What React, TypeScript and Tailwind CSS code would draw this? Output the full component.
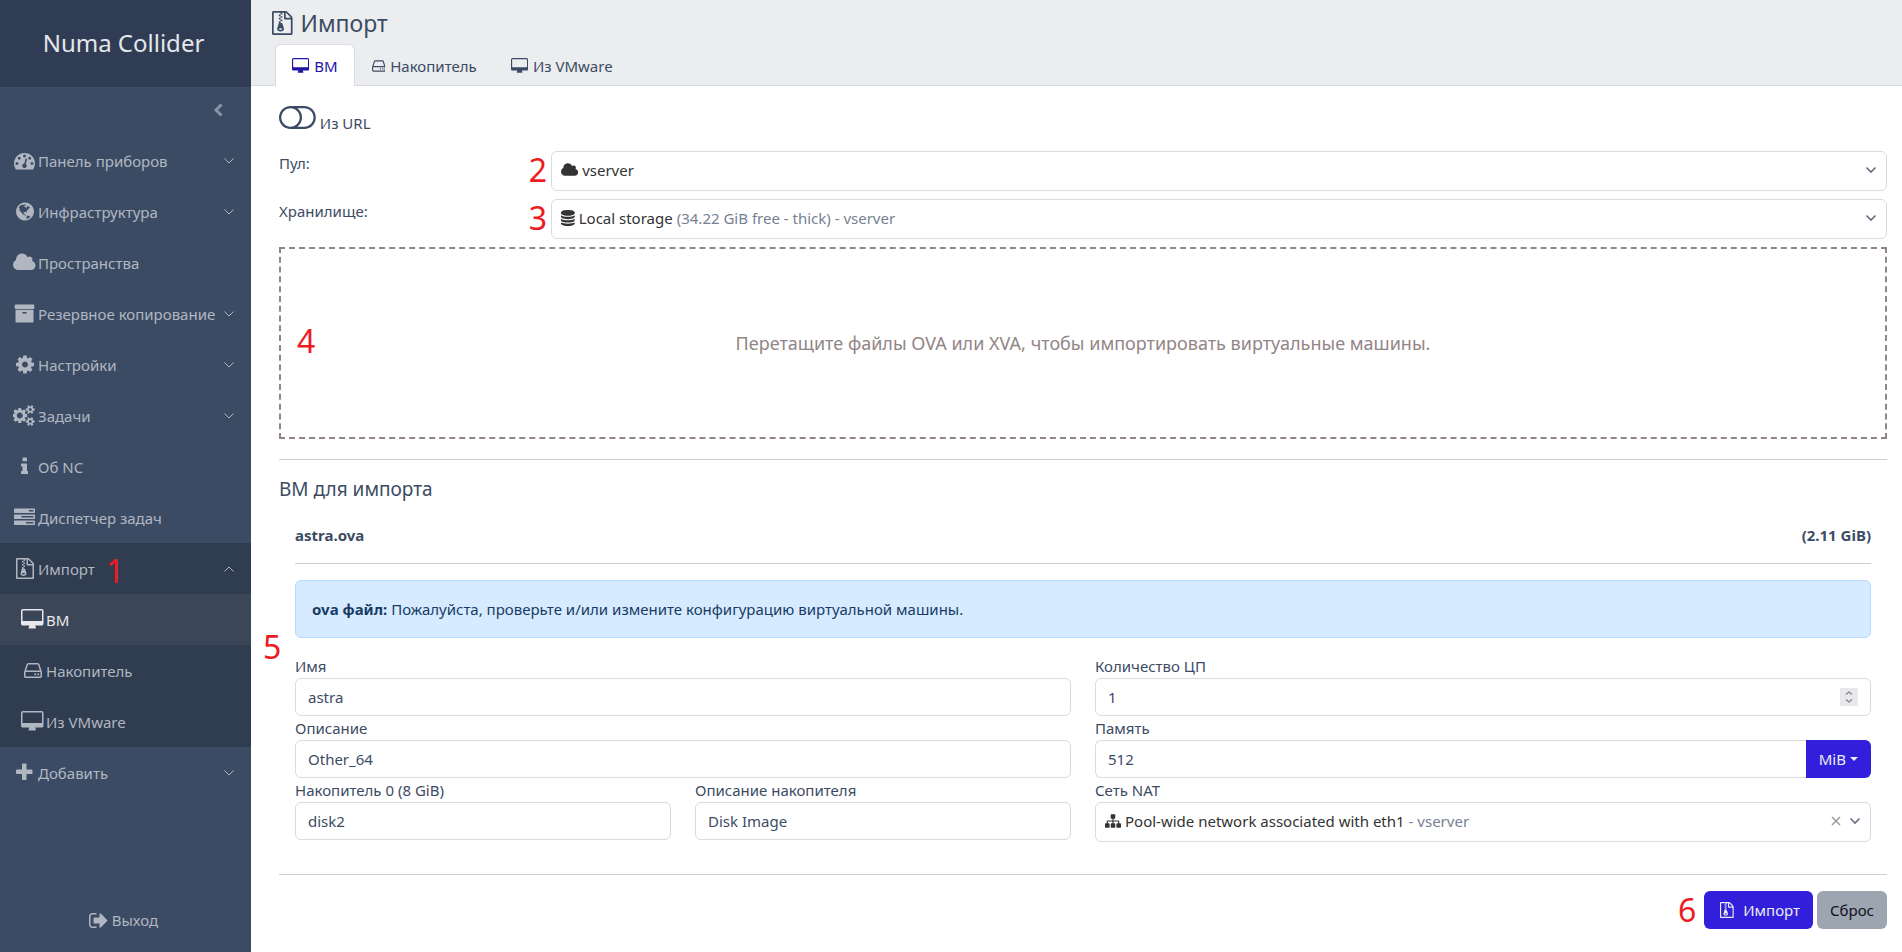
import { useState } from "react";
import type { ReactNode } from "react";
import clsx from "clsx";

type IconDef = { box: string; d: string };

const ICONS: Record<string, IconDef> = {
  desktop: {
    box: "0 0 1920 1792",
    d: "M1792 992v-832q0-13-9.5-22.5t-22.5-9.5h-1600q-13 0-22.5 9.5t-9.5 22.5v832q0 13 9.5 22.5t22.5 9.5h1600q13 0 22.5-9.5t9.5-22.5zm128-832v1088q0 66-47 113t-113 47h-544q0 37 16 77.5t32 71 16 43.5q0 26-19 45t-45 19h-512q-26 0-45-19t-19-45q0-14 16-44t32-70 16-78h-544q-66 0-113-47t-47-113v-1088q0-66 47-113t113-47h1600q66 0 113 47t47 113z",
  },
  hdd: {
    box: "0 0 1536 1792",
    d: "M1040 1216q0 33-23.5 56.5t-56.5 23.5-56.5-23.5-23.5-56.5 23.5-56.5 56.5-23.5 56.5 23.5 23.5 56.5zm256 0q0 33-23.5 56.5t-56.5 23.5-56.5-23.5-23.5-56.5 23.5-56.5 56.5-23.5 56.5 23.5 23.5 56.5zm112 160v-320q0-13-9.5-22.5t-22.5-9.5h-1216q-13 0-22.5 9.5t-9.5 22.5v320q0 13 9.5 22.5t22.5 9.5h1216q13 0 22.5-9.5t9.5-22.5zm-1230-480h1180l-157-482q-4-13-16-21.5t-26-8.5h-782q-14 0-26 8.5t-16 21.5zm1358 160v320q0 66-47 113t-113 47h-1216q-66 0-113-47t-47-113v-320q0-25 16-75l197-606q17-53 63-86t101-33h782q55 0 101 33t63 86l197 606q16 50 16 75z",
  },
  cloud: {
    box: "64 0 1920 1792",
    d: "M1984 1152q0 159-112.5 271.5t-271.5 112.5h-1088q-185 0-316.5-131.5t-131.5-316.5q0-132 71-241.5t187-163.5q-2-28-2-43 0-212 150-362t362-150q158 0 286.5 88t187.5 230q70-62 166-62 106 0 181 75t75 181q0 75-41 138 129 30 213 134.5t84 239.5z",
  },
  dashboard: {
    box: "0 0 1792 1792",
    d: "M384 1152q0-53-37.5-90.5t-90.5-37.5-90.5 37.5-37.5 90.5 37.5 90.5 90.5 37.5 90.5-37.5 37.5-90.5zm192-448q0-53-37.5-90.5t-90.5-37.5-90.5 37.5-37.5 90.5 37.5 90.5 90.5 37.5 90.5-37.5 37.5-90.5zm428 481l101-382q6-26-7.5-48.5t-38.5-29.5-48 6.5-30 39.5l-101 382q-60 5-107 43.5t-63 98.5q-20 77 20 146t117 89 146-20 89-117q16-60-6-117t-72-91zm660-33q0-53-37.5-90.5t-90.5-37.5-90.5 37.5-37.5 90.5 37.5 90.5 90.5 37.5 90.5-37.5 37.5-90.5zm-640-640q0-53-37.5-90.5t-90.5-37.5-90.5 37.5-37.5 90.5 37.5 90.5 90.5 37.5 90.5-37.5 37.5-90.5zm448 192q0-53-37.5-90.5t-90.5-37.5-90.5 37.5-37.5 90.5 37.5 90.5 90.5 37.5 90.5-37.5 37.5-90.5zm320 448q0 261-141 483-19 29-54 29h-1402q-35 0-54-29-141-221-141-483 0-182 71-348t191-286 286-191 348-71 348 71 286 191 191 286 71 348z",
  },
  globe: {
    box: "128 0 1536 1792",
    d: "M896 128q209 0 385.5 103t279.5 279.5 103 385.5-103 385.5-279.5 279.5-385.5 103-385.5-103-279.5-279.5-103-385.5 103-385.5 279.5-279.5 385.5-103zm274 521q-2 1-9.5 9.5t-13.5 9.5q2 0 4.5-5t5-11 3.5-7q6-7 22-15 14-6 52-12 34-8 51 11-2-2 9.5-13t14.5-12q3-2 15-4.5t15-7.5l2-22q-12 1-17.5-7t-6.5-21q0 2-6 8 0-7-4.5-8t-11.5 1-9 1q-10-3-15-7.5t-8-16.5-4-15q-2-5-9.5-11t-9.5-10q-1-2-2.5-5.5t-3-6.5-4-5.5-5.5-2.5-7 5-7.5 10-4.5 5q-3-2-6-1.5t-4.5 1-4.5 3-5 3.5q-3 2-8.5 3t-8.5 2q15-5-1-11-10-4-16-3 9-4 7.5-12t-8.5-14h5q-1-4-8.5-8.5t-17.5-8.5-13-6q-8-5-34-9.5t-33-.5q-5 6-4.5 10.5t4 14 3.5 12.5q1 6-5.5 13t-6.5 12q0 7 14 15.5t10 21.5q-3 8-16 16t-16 12q-5 8-1.5 18.5t10.5 16.5q2 2 1.5 4t-3.5 4.5-5.5 4-6.5 3.5l-3 2q-11 5-20.5-6t-13.5-26q-7-25-16-30-23-8-29 1-5-13-41-26-25-9-58-4 6-1 0-15-7-15-19-12 3-6 4-17.5t1-13.5q3-13 12-23 1-1 7-8.5t9.5-13.5.5-6q35 4 50-11 5-5 11.5-17t10.5-17q9-6 14-5.5t14.5 5.5 14.5 5q14 1 15.5-11t-7.5-20q12 1 3-17-4-7-8-9-12-4-27 5-8 4 2 8-1-1-9.5 10.5t-16.5 17.5-16-5q-1-1-5.5-13.5t-9.5-13.5q-8 0-16 15 3-8-11-15t-24-8q19-12-8-27-7-4-20.5-5t-19.5 4q-5 7-5.5 11.5t5 8 10.5 5.5 11.5 4 8.5 3q14 10 8 14-2 1-8.5 3.5t-11.5 4.5-6 4q-3 4 0 14t-2 14q-5-5-9-17.5t-7-16.5q7 9-25 6l-10-1q-4 0-16 2t-20.5 1-13.5-8q-4-8 0-20 1-4 4-2-4-3-11-9.5t-10-8.5q-46 15-94 41 6 1 12-1 5-2 13-6.5t10-5.5q34-14 42-7l5-5q14 16 20 25-7-4-30-1-20 6-22 12 7 12 5 18-4-3-11.5-10t-14.5-11-15-5q-16 0-22 1-146 80-235 222 7 7 12 8 4 1 5 9t2.5 11 11.5-3q9 8 3 19 1-1 44 27 19 17 21 21 3 11-10 18-1-2-9-9t-9-4q-3 5 .5 18.5t10.5 12.5q-7 0-9.5 16t-2.5 35.5-1 23.5l2 1q-3 12 5.5 34.5t21.5 19.5q-13 3 20 43 6 8 8 9 3 2 12 7.5t15 10 10 10.5q4 5 10 22.5t14 23.5q-2 6 9.5 20t10.5 23q-1 0-2.5 1t-2.5 1q3 7 15.5 14t15.5 13q1 3 2 10t3 11 8 2q2-20-24-62-15-25-17-29-3-5-5.5-15.5t-4.5-14.5q2 0 6 1.5t8.5 3.5 7.5 4 2 3q-3 7 2 17.5t12 18.5 17 19 12 13q6 6 14 19.5t0 13.5q9 0 20 10.5t17 19.5q5 8 8 26t5 24q2 7 8.5 13.5t12.5 9.5l16 8 13 7q5 2 18.5 10.5t21.5 11.5q10 4 16 4t14.5-2.5 13.5-3.5q15-2 29 15t21 21q36 19 55 11-2 1 .5 7.5t8 15.5 9 14.5 5.5 8.5q5 6 18 15t18 15q6-4 7-9-3 8 7 20t18 10q14-3 14-32-31 15-49-18 0-1-2.5-5.5t-4-8.5-2.5-8.5 0-7.5 5-3q9 0 10-3.5t-2-12.5-4-13q-1-8-11-20t-12-15q-5 9-16 8t-16-9q0 1-1.5 5.5t-1.5 6.5q-13 0-15-1 1-3 2.5-17.5t3.5-22.5q1-4 5.5-12t7.5-14.5 4-12.5-4.5-9.5-17.5-2.5q-19 1-26 20-1 3-3 10.5t-5 11.5-9 7q-7 3-24 2t-24-5q-13-8-22.5-29t-9.5-37q0-10 2.5-26.5t3-25-5.5-24.5q3-2 9-9.5t10-10.5q2-1 4.5-1.5t4.5 0 4-1.5 3-6q-1-1-4-3-3-3-4-3 7 3 28.5-1.5t27.5 1.5q15 11 22-2 0-1-2.5-9.5t-.5-13.5q5 27 29 9 3 3 15.5 5t17.5 5q3 2 7 5.5t5.5 4.5 5-.5 8.5-6.5q10 14 12 24 11 40 19 44 7 3 11 2t4.5-9.5 0-14-1.5-12.5l-1-8v-18l-1-8q-15-3-18.5-12t1.5-18.5 15-18.5q1-1 8-3.5t15.5-6.5 12.5-8q21-19 15-35 7 0 11-9-1 0-5-3t-7.5-5-4.5-2q9-5 2-16 5-3 7.5-11t7.5-10q9 12 21 2 8-8 1-16 5-7 20.5-10.5t18.5-9.5q7 2 8-2t1-12 3-12q4-5 15-9t13-5l17-11q3-4 0-4 18 2 31-11 10-11-6-20 3-6-3-9.5t-15-5.5q3-1 11.5-.5t10.5-1.5q15-10-7-16-17-5-43 12zm-163 877q206-36 351-189-3-3-12.5-4.5t-12.5-3.5q-18-7-24-8 1-7-2.5-13t-8-9-12.5-8-11-7q-2-2-7-6t-7-5.5-7.5-4.5-8.5-2-10 1l-3 1q-3 1-5.5 2.5t-5.5 3-4 3 0 2.5q-21-17-36-22-5-1-11-5.5t-10.5-7-10-1.5-11.5 7q-5 5-6 15t-2 13q-7-5 0-17.5t2-18.5q-3-6-10.5-4.5t-12 4.5-11.5 8.5-9 6.5-8.5 5.5-8.5 7.5q-3 4-6 12t-5 11q-2-4-11.5-6.5t-9.5-5.5q2 10 4 35t5 38q7 31-12 48-27 25-29 40-4 22 12 26 0 7-8 20.5t-7 21.5q0 6 2 16z",
  },
  archive: {
    box: "0 0 1792 1792",
    d: "M1088 832q0-26-19-45t-45-19h-256q-26 0-45 19t-19 45 19 45 45 19h256q26 0 45-19t19-45zm576-192v960q0 26-19 45t-45 19h-1408q-26 0-45-19t-19-45v-960q0-26 19-45t45-19h1408q26 0 45 19t19 45zm64-448v256q0 26-19 45t-45 19h-1536q-26 0-45-19t-19-45v-256q0-26 19-45t45-19h1536q26 0 45 19t19 45z",
  },
  cog: {
    box: "128 0 1536 1792",
    d: "M1152 896q0-106-75-181t-181-75-181 75-75 181 75 181 181 75 181-75 75-181zm512-109v222q0 12-8 23t-20 13l-185 28q-19 54-39 91 35 50 107 138 10 12 10 25t-9 23q-27 37-99 108t-94 71q-12 0-26-9l-138-108q-44 23-91 38-16 136-29 186-7 28-36 28h-222q-14 0-24.5-8.5t-11.5-21.5l-28-184q-49-16-90-37l-141 107q-10 9-25 9-14 0-25-11-126-114-165-168-7-10-7-23 0-12 8-23 15-21 51-66.5t54-70.5q-27-50-41-99l-183-27q-13-2-21-12.5t-8-23.5v-222q0-12 8-23t19-13l186-28q14-46 39-92-40-57-107-138-10-12-10-24 0-10 9-23 26-36 98.5-107.5t94.5-71.5q13 0 26 10l138 107q44-23 91-38 16-136 29-186 7-28 36-28h222q14 0 24.5 8.5t11.5 21.5l28 184q49 16 90 37l142-107q9-9 24-9 13 0 25 10 129 119 165 170 7 8 7 22 0 12-8 23-15 21-51 66.5t-54 70.5q26 50 41 98l183 28q13 2 21 12.5t8 23.5z",
  },
  cogs: {
    box: "0 0 1920 1792",
    d: "M832 896q0-106-75-181t-181-75-181 75-75 181 75 181 181 75 181-75 75-181zm768 512q0-52-38-90t-90-38-90 38-38 90q0 53 37.5 90.5t90.5 37.5 90.5-37.5 37.5-90.5zm0-1024q0-52-38-90t-90-38-90 38-38 90q0 53 37.5 90.5t90.5 37.5 90.5-37.5 37.5-90.5zm-384 421v185q0 10-7 19.5t-16 10.5l-155 24q-11 35-32 76 34 48 90 115 7 11 7 20 0 12-7 19-23 30-82.5 89.5t-78.5 59.5q-11 0-21-7l-115-90q-37 19-77 31-11 108-23 155-7 24-30 24h-186q-11 0-20-7.5t-10-17.5l-23-153q-34-10-75-31l-118 89q-7 7-20 7-11 0-21-8-144-133-144-160 0-9 7-19 10-14 41-53t47-61q-23-44-35-82l-152-24q-10-1-17-9.5t-7-19.5v-185q0-10 7-19.5t16-10.5l155-24q11-35 32-76-34-48-90-115-7-11-7-20 0-12 7-20 22-30 82-89t79-59q11 0 21 7l115 90q34-18 77-32 11-108 23-154 7-24 30-24h186q11 0 20 7.5t10 17.5l23 153q34 10 75 31l118-89q8-7 20-7 11 0 21 8 144 133 144 160 0 8-7 19-12 16-42 54t-45 60q23 48 34 82l152 23q10 2 17 10.5t7 19.5zm640 533v140q0 16-149 31-12 27-30 52 51 113 51 138 0 4-4 7-122 71-124 71-8 0-46-47t-52-68q-20 2-30 2t-30-2q-14 21-52 68t-46 47q-2 0-124-71-4-3-4-7 0-25 51-138-18-25-30-52-149-15-149-31v-140q0-16 149-31 13-29 30-52-51-113-51-138 0-4 4-7 4-2 35-20t59-34 30-16q8 0 46 46.5t52 67.5q20-2 30-2t30 2q51-71 92-112l6-2q4 0 124 70 4 3 4 7 0 25-51 138 17 23 30 52 149 15 149 31zm0-1024v140q0 16-149 31-12 27-30 52 51 113 51 138 0 4-4 7-122 71-124 71-8 0-46-47t-52-68q-20 2-30 2t-30-2q-14 21-52 68t-46 47q-2 0-124-71-4-3-4-7 0-25 51-138-18-25-30-52-149-15-149-31v-140q0-16 149-31 13-29 30-52-51-113-51-138 0-4 4-7 4-2 35-20t59-34 30-16q8 0 46 46.5t52 67.5q20-2 30-2t30 2q51-71 92-112l6-2q4 0 124 70 4 3 4 7 0 25-51 138 17 23 30 52 149 15 149 31z",
  },
  info: {
    box: "576 0 640 1792",
    d: "M1216 1344v128q0 26-19 45t-45 19h-512q-26 0-45-19t-19-45v-128q0-26 19-45t45-19h64v-384h-64q-26 0-45-19t-19-45v-128q0-26 19-45t45-19h384q26 0 45 19t19 45v576h64q26 0 45 19t19 45zm-128-1152v192q0 26-19 45t-45 19h-256q-26 0-45-19t-19-45v-192q0-26 19-45t45-19h256q26 0 45 19t19 45z",
  },
  tasks: {
    box: "0 0 1792 1792",
    d: "M1024 1408h640v-128h-640v128zm-384-512h1024v-128h-1024v128zm640-512h384v-128h-384v128zm512 832v256q0 26-19 45t-45 19h-1664q-26 0-45-19t-19-45v-256q0-26 19-45t45-19h1664q26 0 45 19t19 45zm0-512v256q0 26-19 45t-45 19h-1664q-26 0-45-19t-19-45v-256q0-26 19-45t45-19h1664q26 0 45 19t19 45zm0-512v256q0 26-19 45t-45 19h-1664q-26 0-45-19t-19-45v-256q0-26 19-45t45-19h1664q26 0 45 19t19 45z",
  },
  archiveFile: {
    box: "128 0 1536 1792",
    d: "M768 384v-128h-128v128h128zm128 128v-128h-128v128h128zm-128 128v-128h-128v128h128zm128 128v-128h-128v128h128zm700-388q28 28 48 76t20 88v1152q0 40-28 68t-68 28h-1344q-40 0-68-28t-28-68v-1600q0-40 28-68t68-28h896q40 0 88 20t76 48zm-444-244v376h376q-10-29-22-41l-313-313q-12-12-41-22zm384 1528v-1024h-416q-40 0-68-28t-28-68v-416h-128v128h-128v-128h-512v1536h1280zm-627-721l107 349q8 27 8 52 0 83-72.5 137.5t-183.5 54.5-183.5-54.5-72.5-137.5q0-25 8-52 21-63 120-396v-128h128v128h79q22 0 39 13t23 34zm-141 465q53 0 90.5-19t37.5-45-37.5-45-90.5-19-90.5 19-37.5 45 37.5 45 90.5 19z",
  },
  plus: {
    box: "192 0 1408 1792",
    d: "M1600 736v192q0 40-28 68t-68 28h-416v416q0 40-28 68t-68 28h-192q-40 0-68-28t-28-68v-416h-416q-40 0-68-28t-28-68v-192q0-40 28-68t68-28h416v-416q0-40 28-68t68-28h192q40 0 68 28t28 68v416h416q40 0 68 28t28 68z",
  },
  signOut: {
    box: "64 0 1600 1792",
    d: "M704 1440q0 4 1 20t.5 26.5-3 23.5-10 19.5-20.5 6.5h-320q-119 0-203.5-84.5t-84.5-203.5v-704q0-119 84.5-203.5t203.5-84.5h320q13 0 22.5 9.5t9.5 22.5q0 4 1 20t.5 26.5-3 23.5-10 19.5-20.5 6.5h-320q-66 0-113 47t-47 113v704q0 66 47 113t113 47h312l11.5 1 11.5 3 8 5.5 7 9 2 13.5zm928-544q0 26-19 45l-544 544q-19 19-45 19t-45-19-19-45v-288h-448q-26 0-45-19t-19-45v-384q0-26 19-45t45-19h448v-288q0-26 19-45t45-19 45 19l544 544q19 19 19 45z",
  },
  toggleOff: {
    box: "0 256 2048 1280",
    d: "M1152 896q0-104-40.5-198.5t-109.5-163.5-163.5-109.5-198.5-40.5-198.5 40.5-163.5 109.5-109.5 163.5-40.5 198.5 40.5 198.5 109.5 163.5 163.5 109.5 198.5 40.5 198.5-40.5 163.5-109.5 109.5-163.5 40.5-198.5zm768 0q0-104-40.5-198.5t-109.5-163.5-163.5-109.5-198.5-40.5h-386q119 90 188.5 224t69.5 288-69.5 288-188.5 224h386q104 0 198.5-40.5t163.5-109.5 109.5-163.5 40.5-198.5zm128 0q0 130-51 248.5t-136.5 204-204 136.5-248.5 51h-768q-130 0-248.5-51t-204-136.5-136.5-204-51-248.5 51-248.5 136.5-204 204-136.5 248.5-51h768q130 0 248.5 51t204 136.5 136.5 204 51 248.5z",
  },
  database: {
    box: "0 0 1536 1792",
    d: "M768 768q237 0 443-43t325-127v170q0 69-103 128t-280 93.5-385 34.5-385-34.5-280-93.5-103-128v-170q119 84 325 127t443 43zm0 768q237 0 443-43t325-127v170q0 69-103 128t-280 93.5-385 34.5-385-34.5-280-93.5-103-128v-170q119 84 325 127t443 43zm0-384q237 0 443-43t325-127v170q0 69-103 128t-280 93.5-385 34.5-385-34.5-280-93.5-103-128v-170q119 84 325 127t443 43zm0-1152q208 0 385 34.5t280 93.5 103 128v128q0 69-103 128t-280 93.5-385 34.5-385-34.5-280-93.5-103-128v-128q0-69 103-128t280-93.5 385-34.5z",
  },
  sitemap: {
    box: "0 0 1792 1792",
    d: "M1792 1248v320q0 40-28 68t-68 28h-320q-40 0-68-28t-28-68v-320q0-40 28-68t68-28h96v-192h-512v192h96q40 0 68 28t28 68v320q0 40-28 68t-68 28h-320q-40 0-68-28t-28-68v-320q0-40 28-68t68-28h96v-192h-512v192h96q40 0 68 28t28 68v320q0 40-28 68t-68 28h-320q-40 0-68-28t-28-68v-320q0-40 28-68t68-28h96v-192q0-52 38-90t90-38h512v-192h-96q-40 0-68-28t-28-68v-320q0-40 28-68t68-28h320q40 0 68 28t28 68v320q0 40-28 68t-68 28h-96v192h512q52 0 90 38t38 90v192h96q40 0 68 28t28 68z",
  },
};

function Icon({ name, className }: { name: string; className?: string }) {
  const icon = ICONS[name];
  return (
    <svg viewBox={icon.box} fill="currentColor" aria-hidden="true" className={clsx("w-auto shrink-0", className)}>
      <path d={icon.d} />
    </svg>
  );
}

function Chevron({ up, className }: { up?: boolean; className?: string }) {
  return (
    <svg viewBox="0 0 12 8" fill="none" stroke="currentColor" aria-hidden="true" className={clsx("h-2 w-3 shrink-0", className)}>
      <path d={up ? "M1.5 6.5 6 2l4.5 4.5" : "M1.5 1.500 6 6l4.500-4.500"} />
    </svg>
  );
}

// red step number
function Step({ n, className }: { n: number; className: string }) {
  return (
    <span className={clsx("pointer-events-none absolute text-[32px] leading-8 text-[#ed1c24]", className)}>{n}</span>
  );
}

const MENU = [
  { icon: "dashboard", label: "Панель приборов", sub: true },
  { icon: "globe", label: "Инфраструктура", sub: true },
  { icon: "cloud", label: "Пространства" },
  { icon: "archive", label: "Резервное копирование", sub: true },
  { icon: "cog", label: "Настройки", sub: true },
  { icon: "cogs", label: "Задачи", sub: true },
  { icon: "info", label: "Об NC" },
  { icon: "tasks", label: "Диспетчер задач" },
];

const IMPORT_MENU = [
  { icon: "desktop", label: "ВМ", active: true },
  { icon: "hdd", label: "Накопитель" },
  { icon: "desktop", label: "Из VMware" },
];

function MenuLink({ icon, label, chevron, className }: { icon: string; label: string; chevron?: ReactNode; className?: string }) {
  return (
    <a href="#" className={clsx("flex h-[51px] items-center pr-4 whitespace-nowrap", className)}>
      <span className="flex w-[27px] shrink-0 justify-center">
        <Icon name={icon} className="h-[21px]" />
      </span>
      <span className="flex-1">{label}</span>
      {chevron}
    </a>
  );
}

function Sidebar() {
  return (
    <aside className="flex w-[251px] shrink-0 flex-col bg-[#3c4b64] text-[#b1b7c1]">
      <div className="flex h-[87px] items-center justify-center pr-1 pb-[2px] bg-[#303c54] text-[24px] text-[#e4e7eb]">
        Numa Collider
      </div>
      <div className="flex h-12 items-start justify-end px-7 pt-4">
        <button aria-label="Свернуть меню" className="text-[#8a93a2]">
          <svg viewBox="0 0 9 14" fill="none" stroke="currentColor" strokeWidth="3" className="block h-[14px] w-[9px]">
            <path d="M7.500 1.500 2 7l5.500 5.500" />
          </svg>
        </button>
      </div>
      <nav>
        {MENU.map((m) => (
          <MenuLink key={m.label} icon={m.icon} label={m.label} chevron={m.sub && <Chevron />} className="pl-[11px]" />
        ))}
        <div className="bg-[#303c50]">
          <div className="relative">
            <MenuLink icon="archiveFile" label="Импорт" chevron={<Chevron up />} className="pl-[11px]" />
            <Step n={1} className="top-3 left-[106px]" />
          </div>
          {IMPORT_MENU.map((m) => (
            <MenuLink
              key={m.label}
              icon={m.icon}
              label={m.label}
              className={clsx("pl-[19px]", m.active && "bg-[#3c4659] text-[#e6e8eb]")}
            />
          ))}
        </div>
        <MenuLink icon="plus" label="Добавить" chevron={<Chevron />} className="pl-[11px]" />
      </nav>
      <a href="#" className="mt-auto mb-5 flex items-center justify-center gap-1 pr-1">
        <Icon name="signOut" className="h-[21px]" />
        Выход
      </a>
    </aside>
  );
}

const TABS = [
  { icon: "desktop", label: "ВМ" },
  { icon: "hdd", label: "Накопитель" },
  { icon: "desktop", label: "Из VMware" },
];

function PickerField({ id, icon, value, note, clearable }: {
  id: string;
  icon: string;
  value: string;
  note?: string;
  clearable?: boolean;
}) {
  return (
    <div className="flex h-10 items-center rounded-md border border-[#d8dbe0] bg-white px-[9px] pb-[2px] text-[#333]">
      <Icon name={icon} className="mr-1 h-4" />
      <select id={id} className="field-sizing-content appearance-none bg-transparent outline-none">
        <option>{value}</option>
      </select>
      {note && <span className="ml-1 text-[#768192]">{note}</span>}
      <span className="flex-1" />
      {clearable && (
        <button type="button" aria-label="Очистить" className="mr-2 text-[#999]">
          <svg viewBox="0 0 10 10" fill="none" stroke="currentColor" strokeWidth="1.500" className="size-[10px]">
            <path d="m1 1 8 8M9 1 1 9" />
          </svg>
        </button>
      )}
      <Chevron className="text-[#636f83] [stroke-width:1.6]" />
    </div>
  );
}

const INPUT = "h-[38px] w-full rounded-md border border-[#d8dbe0] bg-white px-3 outline-none";

function TextField({ id, label, value }: { id: string; label: string; value: string }) {
  return (
    <div>
      <label htmlFor={id} className="block leading-6">{label}</label>
      <input id={id} type="text" defaultValue={value} className={INPUT} />
    </div>
  );
}

export default function App() {
  const [tab, setTab] = useState(0);
  const [cpus, setCpus] = useState(1);

  return (
    <div className="flex min-h-screen bg-white font-['Noto_Sans',sans-serif] text-[15px] leading-6 text-[#3c4b64]">
      <Sidebar />

      <main className="min-w-0 flex-1">
        <header className="border-b border-[#d8dbe0] bg-[#ebedef] pt-[7px]">
          <h1 className="flex h-8 items-center gap-2 pl-[21px] text-[23px]">
            <Icon name="archiveFile" className="h-6" />
            Импорт
          </h1>
          <div role="tablist" className="-mb-px flex pt-[5px] pl-6">
            {TABS.map((t, i) => (
              <button
                key={t.label}
                role="tab"
                aria-selected={tab === i}
                onClick={() => setTab(i)}
                className={clsx(
                  "flex h-[42px] items-center gap-[5px] rounded-t-md border border-b-0 px-4",
                  tab === i ? "border-[#d8dbe0] bg-white text-[#2115a3]" : "border-transparent"
                )}
              >
                <Icon name={t.icon} className="h-4" />
                {t.label}
              </button>
            ))}
          </div>
        </header>

        <form className="pt-5 pr-[15px] pl-7" onSubmit={(e) => e.preventDefault()}>
          <label className="flex h-[45px] items-start gap-1">
            <input type="checkbox" className="sr-only" />
            <Icon name="toggleOff" className="h-[23px]" />
            <span className="pt-[5px]">Из URL</span>
          </label>

          <div className="grid grid-cols-6 gap-x-6 gap-y-2">
            <label htmlFor="pool">Пул:</label>
            <div className="relative col-span-5">
              <Step n={2} className="top-[3px] right-full mr-1" />
              <PickerField id="pool" icon="cloud" value="vserver" />
            </div>
            <label htmlFor="sr">Хранилище:</label>
            <div className="relative col-span-5">
              <Step n={3} className="top-[3px] right-full mr-1" />
              <PickerField id="sr" icon="database" value="Local storage" note="(34.22 GiB free - thick) - vserver" />
            </div>
          </div>

          <label className="relative mt-2 flex h-48 items-center justify-center border-2 border-dashed border-[#928585] text-[18px] text-[#928585]">
            <input type="file" multiple className="sr-only" />
            <Step n={4} className="top-[76px] left-4" />
            Перетащите файлы OVA или XVA, чтобы импортировать виртуальные машины.
          </label>

          <hr className="mt-5 border-[#cbced3]" />
          <h2 className="mt-[15px] text-[19px] leading-7">ВМ для импорта</h2>

          <section className="relative px-4">
            <div className="flex justify-between pt-5 font-bold">
              <span>astra.ova</span>
              <span>(2.11 GiB)</span>
            </div>
            <hr className="mt-4 border-[#cbced3]" />

            <div className="mt-4 rounded-md border border-[#b8daff] bg-[#d6ebff] p-4 text-[#183c66]">
              <strong>ova файл:</strong> Пожалуйста, проверьте и/или измените конфигурацию виртуальной машины.
            </div>
            <Step n={5} className="top-32 -left-4" />

            <div className="mt-4 grid grid-cols-2 gap-x-6">
              <div>
                <TextField id="vm-name" label="Имя" value="astra" />
                <TextField id="vm-descr" label="Описание" value="Other_64" />
                <div className="grid grid-cols-2 gap-x-6">
                  <TextField id="disk-name" label="Накопитель 0 (8 GiB)" value="disk2" />
                  <TextField id="disk-descr" label="Описание накопителя" value="Disk Image" />
                </div>
              </div>
              <div>
                <label htmlFor="cpus" className="block leading-6">Количество ЦП</label>
                <div className="flex h-[38px] items-center rounded-md border border-[#d8dbe0] px-3">
                  <input
                    id="cpus"
                    type="number"
                    value={cpus}
                    onChange={(e) => setCpus(Number(e.target.value))}
                    className="min-w-0 flex-1 bg-transparent outline-none [appearance:textfield] [&::-webkit-inner-spin-button]:appearance-none"
                  />
                  <span className="flex size-[18px] flex-col items-center justify-between bg-[#e9e9ed] py-[3px] text-[#8f8f9d]">
                    <button type="button" aria-label="Больше" onClick={() => setCpus(cpus + 1)}>
                      <svg viewBox="0 0 8 4" fill="none" stroke="currentColor" strokeWidth="1.500" className="block h-1 w-2">
                        <path d="M1 3.500 4 1l3 2.500" />
                      </svg>
                    </button>
                    <button type="button" aria-label="Меньше" onClick={() => setCpus(Math.max(1, cpus - 1))}>
                      <svg viewBox="0 0 8 4" fill="none" stroke="currentColor" strokeWidth="1.500" className="block h-1 w-2">
                        <path d="M1 .5 4 3l3-2.500" />
                      </svg>
                    </button>
                  </span>
                </div>

                <label htmlFor="memory" className="block leading-6">Память</label>
                <div className="flex h-[38px]">
                  <input
                    id="memory"
                    type="text"
                    defaultValue="512"
                    className="min-w-0 flex-1 rounded-l-md border border-r-0 border-[#d8dbe0] px-3 outline-none"
                  />
                  <button type="button" className="flex items-center gap-1 rounded-r-md bg-[#321fdb] px-[13px] text-[#ebedef]">
                    MiB
                    <span className="border-x-4 border-t-4 border-x-transparent border-t-current" />
                  </button>
                </div>

                <label htmlFor="network" className="block leading-6">Сеть NAT</label>
                <PickerField
                  id="network"
                  icon="sitemap"
                  value="Pool-wide network associated with eth1"
                  note="- vserver"
                  clearable
                />
              </div>
            </div>
          </section>

          <hr className="mt-8 border-[#cbced3]" />
          <div className="flex justify-end gap-1 py-4">
            <div className="relative">
              <Step n={6} className="top-[3px] right-full mr-2" />
              <button type="submit" className="flex h-[38px] items-center gap-[6px] rounded-md bg-[#321fdb] px-[13px] text-[#ebedef]">
                <span className="flex w-5 justify-center">
                  <Icon name="archiveFile" className="h-4" />
                </span>
                Импорт
              </button>
            </div>
            <button type="reset" className="h-[38px] rounded-md bg-[#9da5b1] px-[13px] text-[#0e1020]">Сброс</button>
          </div>
        </form>
      </main>
    </div>
  );
}
